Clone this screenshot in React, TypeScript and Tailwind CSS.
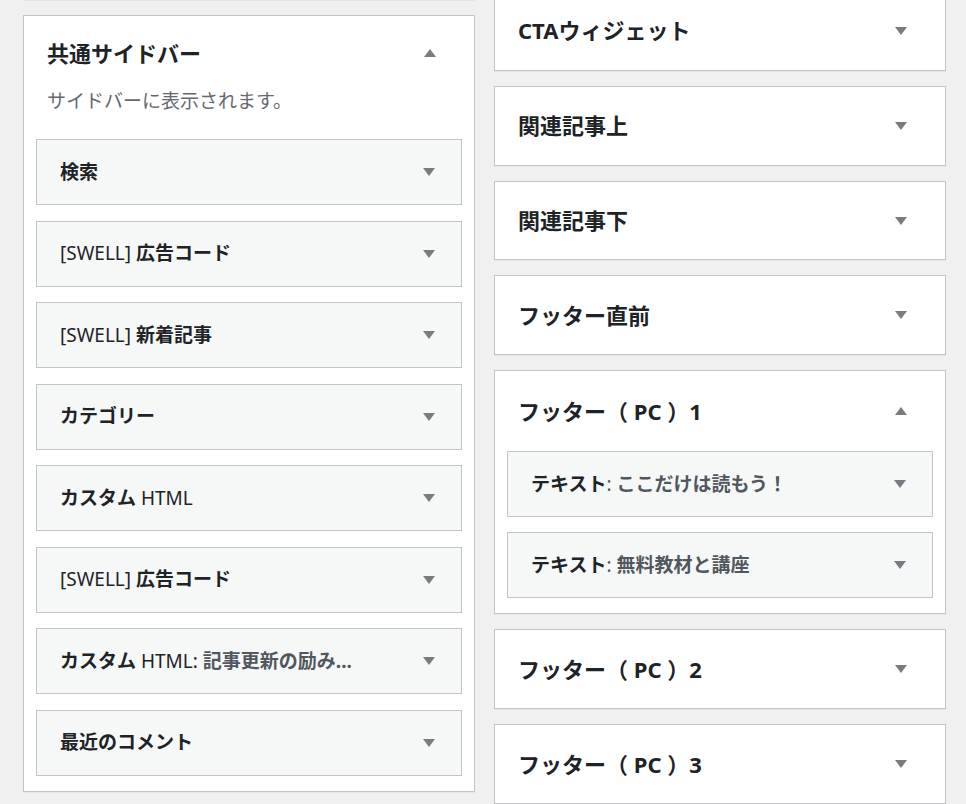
import React from 'react';

const FONT = { fontFamily: '"Noto Sans", "Noto Sans CJK JP", sans-serif' };

const Arrow: React.FC<{ up?: boolean }> = ({ up }) => (
    <svg width="12" height="8" viewBox="0 0 12 8" className="shrink-0">
        {up ? <polygon points="0,8 12,8 6,0" fill="#787c82" /> : <polygon points="0,0 12,0 6,8" fill="#787c82" />}
    </svg>
);

type Part = { text: string; latin?: boolean; sub?: boolean };

const Widget: React.FC<{ parts: Part[] }> = ({ parts }) => (
    <div className="h-[66px] border border-[#c3c4c7] bg-[#f6f7f7] flex items-center justify-between pl-[23px] pr-[26px]">
        <h3 className="text-[19px] font-bold text-[#1d2327] whitespace-nowrap">
            {parts.map((p, i) => (
                <span key={i} className={`${p.latin ? 'font-normal' : ''} ${p.sub ? 'text-[#50575e]' : ''}`}>{p.text}</span>
            ))}
        </h3>
        <Arrow />
    </div>
);

const ClosedSidebar: React.FC<{ title: string }> = ({ title }) => (
    <div className="h-[81px] border border-[#c3c4c7] bg-white shadow-[0_1px_1px_rgba(0,0,0,0.04)] flex items-center justify-between pl-[23px] pr-[38px]">
        <h2 className="text-[22px] font-bold text-[#1d2327] whitespace-nowrap">{title}</h2>
        <Arrow />
    </div>
);

const leftWidgets: Part[][] = [
    [{ text: '検索' }],
    [{ text: '[SWELL] ', latin: true }, { text: '広告コード' }],
    [{ text: '[SWELL] ', latin: true }, { text: '新着記事' }],
    [{ text: 'カテゴリー' }],
    [{ text: 'カスタム' }, { text: ' HTML', latin: true }],
    [{ text: '[SWELL] ', latin: true }, { text: '広告コード' }],
    [{ text: 'カスタム' }, { text: ' HTML: ', latin: true }, { text: '記事更新の励み...', sub: true }],
    [{ text: '最近のコメント' }],
];

export default function App() {
    return (
        <div style={FONT} className="w-[966px] h-[804px] overflow-hidden bg-[#f0f0f1] flex gap-[19px] pl-[23px]">
            <div className="w-[452px] shrink-0">
                <div className="h-[1px] bg-[#e4e4e5]" />
                <div className="mt-[14px] border border-[#c3c4c7] bg-white shadow-[0_1px_1px_rgba(0,0,0,0.04)] px-[12px] pb-[15px]">
                    <div className="h-[74px] flex items-center justify-between pl-[11px] pr-[26px]">
                        <h2 className="text-[22px] font-bold text-[#1d2327]">共通サイドバー</h2>
                        <Arrow up />
                    </div>
                    <p className="h-[24px] leading-[24px] mt-[-1px] pl-[11px] text-[19px] text-[#646970] whitespace-nowrap">サイドバーに表示されます。</p>
                    <div className="mt-[26px] flex flex-col gap-[15.5px]">
                        {leftWidgets.map((w, i) => (
                            <Widget key={i} parts={w} />
                        ))}
                    </div>
                </div>
            </div>
            <div className="w-[452px] shrink-0 mt-[-9px] flex flex-col gap-[15px]">
                <ClosedSidebar title="CTAウィジェット" />
                <ClosedSidebar title="関連記事上" />
                <ClosedSidebar title="関連記事下" />
                <ClosedSidebar title="フッター直前" />
                <div className="border border-[#c3c4c7] bg-white shadow-[0_1px_1px_rgba(0,0,0,0.04)] px-[12px] pb-[15px]">
                    <div className="h-[80px] flex items-center justify-between pl-[11px] pr-[26px]">
                        <h2 className="text-[22px] font-bold text-[#1d2327] whitespace-nowrap">フッター（ PC ）1</h2>
                        <Arrow up />
                    </div>
                    <div className="flex flex-col gap-[15px]">
                        <Widget parts={[{ text: 'テキスト' }, { text: ': ', latin: true, sub: true }, { text: 'ここだけは読もう！', sub: true }]} />
                        <Widget parts={[{ text: 'テキスト' }, { text: ': ', latin: true, sub: true }, { text: '無料教材と講座', sub: true }]} />
                    </div>
                </div>
                <ClosedSidebar title="フッター（ PC ）2" />
                <ClosedSidebar title="フッター（ PC ）3" />
            </div>
        </div>
    );
}
